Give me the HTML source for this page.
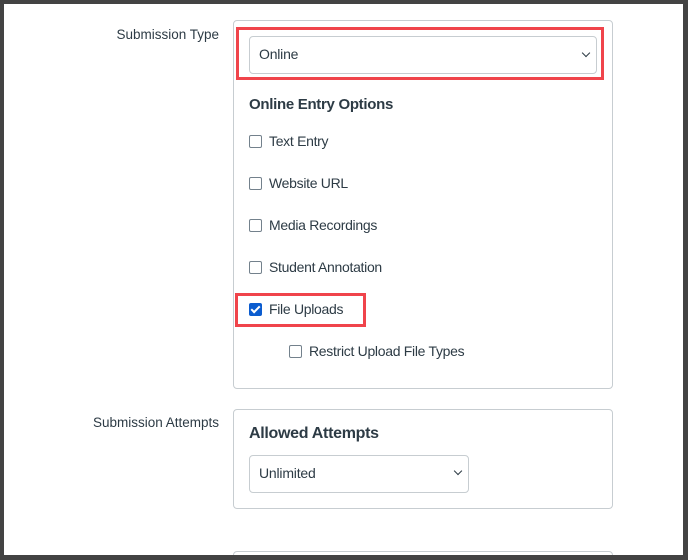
<!DOCTYPE html>
<html><head><style>
html,body{margin:0;width:688px;height:560px;overflow:hidden}
body{background:#434343;position:relative;font-family:"Liberation Sans",sans-serif;color:#2d3b45}
.page{position:absolute;left:4px;top:4px;width:679px;height:551px;background:#fff;overflow:hidden}
.a{position:absolute}
.box{position:absolute;border:1px solid #c7cdd1;border-radius:4px;background:#fff}
.lbl{font-size:13.5px;color:#2d3b45;text-align:right;width:200px}
.sel{position:absolute;border:1px solid #c7cdd1;border-radius:4px;background:#fff;font-size:14px;box-sizing:border-box;padding-left:9px;line-height:35px;letter-spacing:-0.2px}
.red{position:absolute;border:3px solid #f0444b;box-sizing:border-box}
.cb{position:absolute;width:11px;height:11px;border:1px solid #73818c;border-radius:2px;background:#fff}
.ct{position:absolute;font-size:14px;color:#2d3b45;letter-spacing:-0.3px}
.chev{position:absolute;width:5px;height:5px;border-right:1.5px solid #2d3b45;border-bottom:1.5px solid #2d3b45;transform:rotate(45deg)}
</style></head><body>
<div class="page">
<div class="box" style="left:229px;top:547px;width:378px;height:20px"></div>
</div>
<div class="a lbl" style="left:19px;top:27px">Submission Type</div>
<div class="box" style="left:233px;top:20px;width:378px;height:367px"></div>
<div class="red" style="left:236px;top:27px;width:368px;height:53px"></div>
<div class="sel" style="left:249px;top:36px;width:348px;height:38px">Online</div>
<div class="chev" style="left:583px;top:50px"></div>
<div class="a" style="left:249px;top:96px;font-size:15px;font-weight:bold;letter-spacing:-0.3px">Online Entry Options</div>
<div class="cb" style="left:249px;top:135px"></div><div class="ct" style="left:269px;top:133px">Text Entry</div>
<div class="cb" style="left:249px;top:177px"></div><div class="ct" style="left:269px;top:175px">Website URL</div>
<div class="cb" style="left:249px;top:219px"></div><div class="ct" style="left:269px;top:217px">Media Recordings</div>
<div class="cb" style="left:249px;top:261px"></div><div class="ct" style="left:269px;top:259px">Student Annotation</div>
<div class="red" style="left:235px;top:293px;width:131px;height:34px"></div>
<div class="a" style="left:249px;top:303px;width:13px;height:13px;background:#0b5ccf;border-radius:2px"></div>
<div class="a" style="left:253px;top:304px;width:3px;height:7px;border-right:2px solid #fff;border-bottom:2px solid #fff;transform:rotate(45deg)"></div>
<div class="ct" style="left:269px;top:301px">File Uploads</div>
<div class="cb" style="left:289px;top:345px"></div><div class="ct" style="left:309px;top:343px">Restrict Upload File Types</div>
<div class="a lbl" style="left:19px;top:415px">Submission Attempts</div>
<div class="box" style="left:233px;top:409px;width:378px;height:98px"></div>
<div class="a" style="left:249px;top:425px;font-size:16px;font-weight:bold;letter-spacing:-0.3px">Allowed Attempts</div>
<div class="sel" style="left:249px;top:455px;width:220px;height:38px">Unlimited</div>
<div class="chev" style="left:455px;top:468px"></div>
</body></html>
